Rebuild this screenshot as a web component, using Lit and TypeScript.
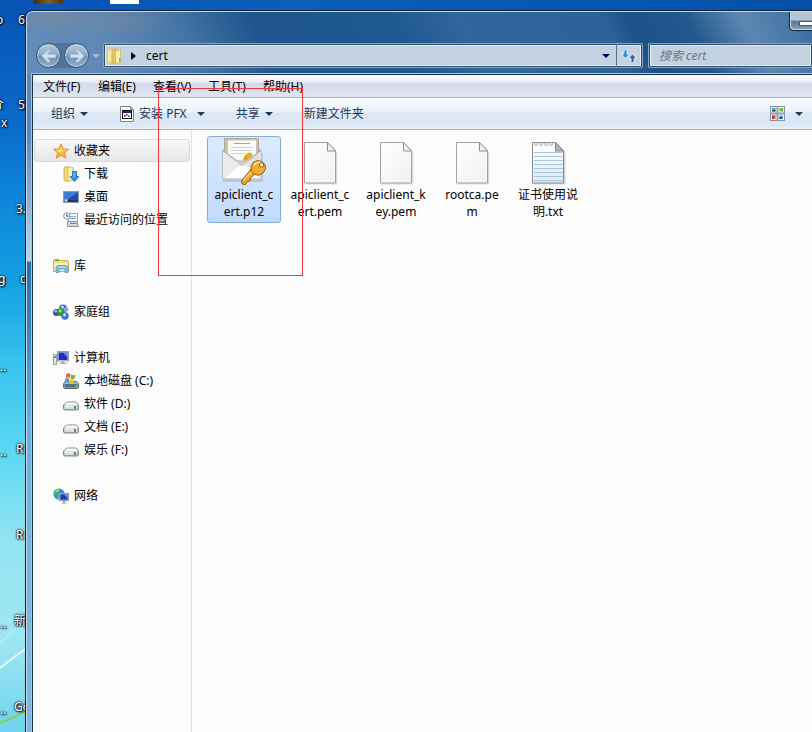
import { LitElement, html, css, svg } from "lit";
import { customElement, property } from "lit/decorators.js";
import { classMap } from "lit/directives/class-map.js";

const FONT = css`"Noto Sans", "Noto Sans CJK SC", sans-serif`;

const drive = svg`
  <path d="M3.500 6.500 5 6h8l2.500 3v4l-1 1H1.500l-1-1V9z" fill="#b4b4b8" stroke="#85868a"/>
  <path d="M4 6.500h9L15 9.500H1z" fill="#fbfbfb"/>
  <path d="M1.500 10h13v3h-13z" fill="#d9d9e4"/>
  <path d="M11 10h2v3h-2z" fill="#35b335"/>
  <path d="M2 10h8v1H2z" fill="#f4f4f8"/>`;

const folderBase = svg`
  <path d="M1 1.500 5 .5l1 1h4v12l-5 2-4-1z" fill="#f1d878" stroke="#c9a545" stroke-width=".8"/>
  <path d="M5 1v14.500l5-2V1.500z" fill="#fbeeb0" stroke="#cfae50" stroke-width=".6"/>`;

const glyphs: Record<string, unknown> = {
  star: svg`
    <path d="M8 .8 10.100 6l5.400.3-4.200 3.500 1.500 5.400L8 12.200l-4.800 3 1.500-5.400L.5 6.300 5.900 6z"
      fill="#ffb732" stroke="#e8892c" stroke-width="1"/>
    <path d="M8 3 9.300 7l3.700.3-3.500 1.200L8 9 5 9 3 7.200 6.700 7z" fill="#ffe08a"/>`,
  downloads: svg`${folderBase}
    <path d="M9.500 5.500h4v5H16l-4.500 5-4.500-5h2.500z" fill="#2f9ae8" stroke="#1567b4" stroke-width=".8"/>
    <path d="M10.500 6.500h1v5h-1z" fill="#8fd0ff"/>`,
  desktop: svg`
    <rect x=".5" y="2.500" width="15" height="11" fill="#1d4fae" stroke="#8d99ad"/>
    <path d="M1 3h14L4 11H1z" fill="#3a7ad4"/>
    <rect x="1" y="11" width="14" height="2" fill="#26364f"/>
    <circle cx="3" cy="11.500" r="1.800" fill="#59c2f2"/>
    <path d="M2 11h2v1H2z" fill="#f4d35e"/>`,
  recent: svg`
    <path d="M5.500 1.500h9v9h-9z" fill="#f7f9fb" stroke="#9ba3ab"/>
    <path d="M7 4h3v1H7zM11 4h2v1h-2zM7 6h6v1H7z" fill="#69a3d8"/>
    <path d="M4.500 9.500h9l2 5h-11z" fill="#d5d9dd" stroke="#888f96"/>
    <path d="M7 11h6v1H7z" fill="#757d84"/>
    <circle cx="3.800" cy="4" r="3.200" fill="#f3f6f8" stroke="#8c959d"/>
    <path d="M3.800 2v2.200h1.700" fill="none" stroke="#555"/>`,
  library: svg`
    <path d="M.5 2.500 1.500 1.500h5l1 1h7l1 1v10H.5z" fill="#f3dd86" stroke="#c9ad58"/>
    <path d="M1 5h14v8H1z" fill="#fbf0b8"/>
    <path d="M2 2h4v1H2z" fill="#45a83a"/>
    <path d="M3 14.500V9.500l1.500-2h9L15 9.500v5h-3V11H6v3.500z" fill="#6fc4ea" stroke="#4a9ccb" stroke-width=".8"/>
    <path d="M5 8.500h8v1H5z" fill="#c9effc"/>`,
  homegroup: svg`
    <circle cx="10" cy="4.500" r="4" fill="#3f6ed0"/>
    <circle cx="3.500" cy="8.500" r="3.500" fill="#2e4fc0"/>
    <circle cx="12" cy="12" r="3.700" fill="#4570d0"/>
    <circle cx="8" cy="8" r="3.900" fill="#2f9a33"/>
    <circle cx="13" cy="5.500" r="2.300" fill="#7fa8e2"/>
    <circle cx="9.500" cy="3" r="1.500" fill="#bcd7f8"/>
    <circle cx="2.800" cy="7.300" r="1.300" fill="#b4c6f7"/>
    <circle cx="7.300" cy="7" r="1.400" fill="#a7e39a"/>
    <circle cx="11.500" cy="11" r="1.400" fill="#d8e7fb"/>`,
  computer: svg`
    <rect x=".5" y="4.500" width="3" height="10" fill="#e4e6e8" stroke="#9a9fa5"/>
    <path d="M1 6h2v2H1z" fill="#3fae3a"/>
    <rect x="4.500" y="1.500" width="11" height="9.500" fill="#d4d8dd" stroke="#9a9fa5"/>
    <rect x="5.500" y="2.500" width="9" height="7.500" fill="#1a2fc0"/>
    <path d="M10 2.500h4.500v5z" fill="#6b93f0"/>
    <path d="M8.500 11.500h3V13h2v1h-7v-1h2z" fill="#a5aab0"/>`,
  system: svg`
    <path d="M2.500 8.500h11l2 2v4l-.8 1H1.300l-.8-1v-4z" fill="#a9b5bd" stroke="#5e6d77"/>
    <path d="M1.500 11h13v3.500h-13z" fill="#4d7488"/>
    <path d="M12.500 12h1.500v2h-1.500z" fill="#62d848"/>
    <path d="M3.500 1q2-1.500 4 0L6.500 5q-2-1.300-4 0z" fill="#e8602c"/>
    <path d="M8.200 1.500q2 1.300 4.300.3L11.500 5.700q-2 1-4.200-.3z" fill="#72b83e"/>
    <path d="M2.300 5.700q2-1.200 4 0L5.300 9.700q-2-1.200-4 0z" fill="#4b9be0"/>
    <path d="M7 6q2 1.200 4.300.3L10.300 10.300q-2.200.9-4.300-.3z" fill="#f8c22e"/>`,
  drive,
  network: svg`
    <circle cx="6" cy="6" r="5.600" fill="#2f8fd4"/>
    <path d="M2 3q3-3 5-2L6 4 3 6 .6 5.500zM5 6l3-1 1 3-3 3.500-2-2z" fill="#58c43f"/>
    <path d="M3 2.500Q5 1 6 1.500L4 4z" fill="#c8f3a8"/>
    <rect x="6.500" y="5.500" width="9" height="7" fill="#c8ced6" stroke="#9aa0a8"/>
    <rect x="7.300" y="6.300" width="7.400" height="5.400" fill="#1b3cc0"/>
    <path d="M11 6.300h3.700v4z" fill="#6f98f0"/>
    <path d="M10 13h2v1.500h1.500v1h-5v-1H10z" fill="#9aa0a7"/>`,
  folder: svg`
    <path d="M.5 2.500 5 .5v15l-4.500-1.500z" fill="#f8ea9c" stroke="#dcc268" stroke-width=".8"/>
    <path d="M5 1.500 10 .5v14l-5 1z" fill="#e3c362" stroke="#d3b552" stroke-width=".8"/>
    <path d="M8.500 3 13.500 1.500v13l-5 1z" fill="#fbefa8" stroke="#d3b552" stroke-width=".8"/>
    <path d="M12 10h1.500v4H12z" fill="#58b4e8"/>`,
  installer: svg`
    <path d="M1.500.5h10l3 3v12h-13z" fill="#fff" stroke="#808080"/>
    <path d="M11.500.5v3h3z" fill="#ccc" stroke="#808080" stroke-width=".8"/>
    <rect x="3.500" y="4.500" width="9" height="8" fill="#fff" stroke="#111"/>
    <path d="M4 5h8v2H4z" fill="#102a90"/>
    <path d="M5 9h1.500v2H5z" fill="#2244d0"/><path d="M7 8h1.500v2H7z" fill="#e02020"/>
    <path d="M9 9.500h2V11H9z" fill="#18a048"/>`,
  views: svg`
    <g fill="#fff" stroke="#8390a6">
      <rect x=".5" y=".5" width="6.500" height="6.500"/><rect x="8" y=".5" width="6.500" height="6.500"/>
      <rect x=".5" y="8" width="6.500" height="6.500"/><rect x="8" y="8" width="6.500" height="6.500"/>
    </g>
    <path d="M2 2h3.500v3.500H2z" fill="#3f9ccc"/><path d="M2 4h3.500v1.500H2z" fill="#1d6a50"/>
    <path d="M9.500 2H13v3.500H9.500z" fill="#5cb53c"/><path d="M9.500 2h2v1.500h-2z" fill="#f0a020"/>
    <path d="M2 9.500h3.500V13H2z" fill="#b82812"/><path d="M4 11h1.500v2H4z" fill="#e8a52c"/>
    <path d="M9.500 9.500H13V13H9.500z" fill="#5b95dc"/><path d="M9.500 11h2v2h-2z" fill="#1b3a78"/>`,
  refresh: svg`
    <path d="M6.500 1Q2 2 2.800 6H.5l4 4.500 4-4.500H6Q5.500 3.500 6.500 1z" fill="#2f8fdc" stroke="#f2f8fd" stroke-width=".8"/>
    <path d="M9.500 15.500q4.500-1 3.700-5h2.300l-4-4.500-4 4.500H10q.5 2.500-.5 5z" fill="#2f62c0" stroke="#f2f8fd" stroke-width=".8"/>`,
  back: svg`<path d="M7.500 1 .5 8l7 7 2-2-3-3H15V6H6.500l3-3z" fill="#d3e0ed" stroke="#86a3c0" stroke-width=".8"/>`,
  forward: svg`<path d="M8.500 1 15.500 8l-7 7-2-2 3-3H1V6h8.500l-3-3z" fill="#d3e0ed" stroke="#86a3c0" stroke-width=".8"/>`,
};

const page = svg`
  <path d="M8.500 4.500h24l8 9v32h-32z" fill="#000" opacity=".12" transform="translate(1 1)"/>
  <path d="M8.500 4.500h23l8 8.500v32h-31z" fill="url(#sheet)" stroke="#a3a3a3"/>
  <path d="M31.500 4.500V13h8z" fill="#f4f4f4" stroke="#8f8f8f"/>`;

const bigGlyphs: Record<string, unknown> = {
  page,
  text: svg`
    <path d="M8.500 4.500h24l8 9v32h-32z" fill="#000" opacity=".15" transform="translate(1 1)"/>
    <path d="M8.500 4.500h23l8 8.500v32h-31z" fill="url(#note)" stroke="#858a91"/>
    <path d="M10 14.500h28M10 18.500h29M10 22.500h29M10 26.500h29M10 30.500h29M10 34.500h29M10 38.500h29M10 42.500h29" stroke="#a9c7da"/>
    <path d="M31.500 4.500V13h8z" fill="#b4b9be" stroke="#7d8389"/>
    <g fill="#fff" stroke="#999" stroke-width=".8">
      <circle cx="12" cy="6" r="1.500"/><circle cx="17" cy="6" r="1.500"/><circle cx="22" cy="6" r="1.500"/><circle cx="27" cy="6" r="1.500"/>
    </g>`,
  certificate: svg`
    <path d="M3 15h40v29H3z" fill="#3a4a60" opacity=".18"/>
    <path d="M2.500 13 7 8h31l3.500 5z" fill="#b9b6b0"/>
    <path d="M4.500.5h34v22h-34z" fill="#cdc2b0" stroke="#b1a792"/>
    <path d="M8 2.500h28v20H8z" fill="#fbfbf9"/>
    <path d="M14 5.500h16" stroke="#9aa6b8"/><path d="M11 9.500h22M11 12.500h20M11 15.500h13" stroke="#cdd2d9"/>
    <path d="m23 21 2-4 4-2 3 4-4 4-3 1z" fill="#e0a416"/><circle cx="29.500" cy="17.500" r="3" fill="#eab020"/>
    <path d="M2.500 12.500 22 25.500l19-13v28h-38.500z" fill="#f5f5f6" stroke="#bdbdc0"/>
    <path d="M3 13l16 12L3 40z" fill="#ebebec"/><path d="M41 13 25 25l16 15z" fill="#e0e0e3"/>
    <path d="M3 40.500 19 27q3-2 6 0l16 13.500z" fill="#fff" stroke="#d6d6d8"/>
    <path d="M2.500 12.500 22 27.500l19-15" fill="none" stroke="#a9acb2"/>
    <path d="m31 31 4.500 4.500-5 4.500-.5 3-3 .5-1.500 3-3.500-.5-.5-3z" fill="#f0a52c" stroke="#94600f"/>
    <path d="M33 24.500q5-3.500 9-1 4.500 3 3.500 7.500-1.500 5-6.500 6-5 .5-7.500-3.500-1.500-5 1.500-9z" fill="#f4ab35" stroke="#95600f"/>
    <path d="M34 27q3.500-4 8-2" fill="none" stroke="#ffe3a0" stroke-width="1.500"/>
    <circle cx="41.500" cy="27" r="2.200" fill="#e9eef5" stroke="#95600f"/>
    <path d="m31.500 34-8 8.500" stroke="#ffd884" stroke-width="1.200"/>`,
};

@customElement("ui-icon")
class UiIcon extends LitElement {
  @property() name = "";
  @property({ type: Boolean, reflect: true }) large = false;

  static styles = css`
    :host { display: block; flex: none; width: 16px; height: 16px; }
    :host([large]) { width: 48px; height: 48px; }
    svg { display: block; width: 100%; height: 100%; }
  `;

  render() {
    if (!this.large) {
      return html`<svg viewBox="0 0 16 16" aria-hidden="true">${glyphs[this.name]}</svg>`;
    }
    return html`
      <svg viewBox="0 0 48 48" aria-hidden="true">
        <defs>
          <linearGradient id="sheet" x1="0" y1="0" x2="1" y2="1">
            <stop offset="0" stop-color="#ffffff"/><stop offset="1" stop-color="#f1f0ee"/>
          </linearGradient>
          <linearGradient id="note" x1="0" y1="0" x2="0" y2="1">
            <stop offset="0" stop-color="#ffffff"/><stop offset="1" stop-color="#dfe9f5"/>
          </linearGradient>
        </defs>
        ${bigGlyphs[this.name]}
      </svg>`;
  }
}

interface Place { label: string; icon: string; children?: Place[]; selected?: boolean; }

const places: Place[] = [
  {
    label: "收藏夹", icon: "star", selected: true,
    children: [
      { label: "下载", icon: "downloads" },
      { label: "桌面", icon: "desktop" },
      { label: "最近访问的位置", icon: "recent" },
    ],
  },
  { label: "库", icon: "library" },
  { label: "家庭组", icon: "homegroup" },
  {
    label: "计算机", icon: "computer",
    children: [
      { label: "本地磁盘 (C:)", icon: "system" },
      { label: "软件 (D:)", icon: "drive" },
      { label: "文档 (E:)", icon: "drive" },
      { label: "娱乐 (F:)", icon: "drive" },
    ],
  },
  { label: "网络", icon: "network" },
];

@customElement("place-tree")
class PlaceTree extends LitElement {
  static styles = css`
    :host { display: block; font: 12px/23px ${FONT}; }
    ul { list-style: none; margin: 0; padding: 0; }
    .groups { display: flex; flex-direction: column; gap: 23px; padding: 9px 1px 0; }
    .link {
      display: flex; align-items: center; gap: 5px; height: 23px; box-sizing: border-box;
      padding-left: 18px; border: 1px solid transparent; border-radius: 3px;
      color: #000; text-decoration: none; white-space: nowrap;
    }
    .child { padding-left: 28px; }
    .selected { border-color: #d9d9d9; background: linear-gradient(#f8f8f8, #e6e6e6); }
  `;

  private row(p: Place, child: boolean) {
    return html`<a class=${classMap({ link: true, child, selected: !!p.selected })} href="#">
      <ui-icon name=${p.icon}></ui-icon><span>${p.label}</span></a>`;
  }

  render() {
    return html`
      <ul class="groups">
        ${places.map((p) => html`
          <li>
            ${this.row(p, false)}
            ${p.children ? html`<ul>${p.children.map((c) => html`<li>${this.row(c, true)}</li>`)}</ul>` : ""}
          </li>`)}
      </ul>`;
  }
}

const files = [
  { lines: ["apiclient_c", "ert.p12"], icon: "certificate", selected: true },
  { lines: ["apiclient_c", "ert.pem"], icon: "page" },
  { lines: ["apiclient_k", "ey.pem"], icon: "page" },
  { lines: ["rootca.pe", "m"], icon: "page" },
  { lines: ["证书使用说", "明.txt"], icon: "text" },
];

@customElement("file-grid")
class FileGrid extends LitElement {
  static styles = css`
    :host { display: block; }
    .files { display: flex; flex-wrap: wrap; gap: 2px; list-style: none; margin: 0; padding: 6px 15px; }
    .file {
      display: flex; flex-direction: column; align-items: center; box-sizing: border-box;
      width: 74px; height: 87px; padding: 1px 0; border: 1px solid transparent; border-radius: 3px;
      background: none; color: #000; font: 12px/17px ${FONT}; white-space: nowrap;
    }
    .selected { border-color: #84acdd; background: linear-gradient(#dcebfc, #c1dbfc); }
    .line { display: block; }
  `;

  render() {
    return html`
      <ul class="files">
        ${files.map((f) => html`
          <li>
            <button class=${classMap({ file: true, selected: !!f.selected })}>
              <ui-icon large name=${f.icon}></ui-icon>
              <span>${f.lines.map((l) => html`<span class="line">${l}</span>`)}</span>
            </button>
          </li>`)}
      </ul>`;
  }
}

@customElement("explorer-window")
class ExplorerWindow extends LitElement {
  static styles = css`
    :host {
      display: flex; flex-direction: column; box-sizing: border-box; overflow: hidden;
      border: solid #0b1d33; border-width: 1px 0 0 1px; border-top-left-radius: 7px;
      font: 12px/16px ${FONT}; color: #000;
    }
    button { margin: 0; padding: 0; border: 0; background: none; font: inherit; color: inherit; }
    .header {
      border: solid #c8dcec; border-width: 1px 0 0 1px; border-top-left-radius: 6px;
      background:
        radial-gradient(ellipse 60px 14px at 25px 8px, rgba(125, 135, 155, .6), transparent),
        radial-gradient(ellipse 50px 14px at 100px 9px, rgba(125, 135, 155, .5), transparent),
        linear-gradient(62deg, #648cb8 0%, #5f88b4 12%, #4474a6 22%, #1e558d 31%, #1f5990 48%, #2f669b 56%, #2c6297 74%, #1d5288 77%, #23588e 84%, #5c87b1 91%, #3a6b9f 100%);
    }
    .title { display: flex; justify-content: flex-end; height: 31px; }
    .minimize {
      display: flex; justify-content: flex-end; align-items: flex-end; box-sizing: border-box; width: 23px; height: 19px;
      padding: 0 0 4px; border: solid #12283f; border-width: 0 0 1px 1px; border-bottom-left-radius: 5px;
      background: linear-gradient(#b3c4d5 0 45%, #5a7590 50%, #8ba5bd);
      box-shadow: inset 1px -1px 0 #c5d5e3;
    }
    .dash { width: 13px; height: 5px; box-sizing: border-box; border: 1px solid #4b5663; border-right: 0; background: #fff; }
    .nav { display: flex; align-items: center; height: 25px; padding: 0 0 5px 9px; }
    .history { display: flex; gap: 3px; border-radius: 13px; background: rgba(60, 95, 135, .5); }
    .round {
      display: grid; place-items: center; box-sizing: border-box; width: 25px; height: 25px;
      border: 1px solid #37557a; border-radius: 50%;
      background: linear-gradient(#b9cadc, #8faac6 48%, #6c8fb4 52%, #8fb0ce);
      box-shadow: inset 0 0 0 1px rgba(215, 230, 245, .6);
    }
    .recent { display: grid; place-items: center; width: 14px; height: 25px; }
    .arrow { flex: none; width: 0; height: 0; border: solid transparent; border-width: 4px 4px 0; border-top-color: #1e395b; }
    .pale { border-top-color: #a6bdd6; }
    .navy { border-top-color: #000060; }
    .field {
      display: flex; align-items: center; box-sizing: border-box; height: 25px;
      border: 1px solid #84a4c3; border-radius: 2px; background: #c3d2e1;
      box-shadow: inset 0 0 0 1px #36506c, inset 0 0 0 2px #e4edf4;
    }
    .address { flex: 1; min-width: 0; padding: 0 1px 0 3px; }
    .crumb { display: flex; align-items: center; flex: 1; gap: 10px; padding-left: 8px; }
    .caret { width: 0; height: 0; border: solid transparent; border-width: 4px 0 4px 5px; border-left-color: #000; }
    .drop { display: grid; place-items: center; width: 20px; height: 21px; }
    .refresh { display: grid; place-items: center; box-sizing: border-box; width: 25px; height: 23px; border-left: 1px solid #5c7085; }
    .search { flex: 0 0 164px; margin-left: 5px; border-right: 0; }
    .query {
      width: 100%; box-sizing: border-box; border: 0; outline: 0; padding: 0 10px; background: none;
      font: italic 12px/16px ${FONT};
    }
    .query::placeholder { color: #6c7680; opacity: 1; }
    .body {
      display: flex; flex: 1; border-left: 1px solid #c8dcec; padding-left: 4px;
      background: linear-gradient(#5f87b3 0, #5b86ba 60px, #b6cfe8 180px, #b9d3ea 188px, #2e6ea6 189px, #3980b6 250px, #66b0dc 350px, #76b4dd 480px, #80b6e2 100%);
    }
    .client {
      display: flex; flex-direction: column; flex: 1; min-width: 0;
      border: solid #a9c6de; border-width: 1px 0 0 1px;
    }
    .inner { display: flex; flex-direction: column; flex: 1; border: solid #17344f; border-width: 1px 0 0 1px; background: #fcfcfc; }
    .menu {
      display: grid; grid-template-columns: repeat(5, 55px); height: 22px; padding-left: 10px;
      border-bottom: 1px solid #a9b3c8; background: linear-gradient(#fff 0, #ecedf6 7px, #d4daec 8px, #e0e5f4 100%);
    }
    .item { text-align: left; white-space: nowrap; padding-top: 2px; }
    .tools {
      display: flex; align-items: center; height: 31px; padding: 0 9px 0 18px; border-bottom: 1px solid #a0afc4;
      background: linear-gradient(#fcfeff 0, #e8f2fb 14px, #dce6f4 15px, #dde8f6 28px, #e9f1fb 100%); color: #1e395b;
    }
    .tool { display: flex; align-items: center; gap: 5px; white-space: nowrap; }
    .install { margin-left: 31px; gap: 10px; }
    .named { display: flex; align-items: center; gap: 4px; }
    .share, .create { margin-left: 31px; }
    .views { margin-left: auto; gap: 9px; }
    .panes { display: flex; flex: 1; }
    .side { flex: none; width: 158px; border-right: 1px solid #d9e3f3; }
    .main { flex: 1; min-width: 0; }
  `;

  render() {
    return html`
      <header class="header">
        <div class="title"><button class="minimize" aria-label="最小化"><span class="dash"></span></button></div>
        <div class="nav">
          <div class="history">
            <button class="round" aria-label="后退"><ui-icon name="back"></ui-icon></button>
            <button class="round" aria-label="前进"><ui-icon name="forward"></ui-icon></button>
          </div>
          <button class="recent" aria-label="最近的页面"><span class="arrow pale"></span></button>
          <div class="field address">
            <ui-icon name="folder"></ui-icon>
            <button class="crumb"><span class="caret"></span>cert</button>
            <button class="drop" aria-label="以前的位置"><span class="arrow navy"></span></button>
            <button class="refresh" aria-label="刷新"><ui-icon name="refresh"></ui-icon></button>
          </div>
          <div class="field search"><input class="query" type="text" aria-label="搜索" placeholder="搜索 cert"></div>
        </div>
      </header>
      <div class="body">
        <div class="client"><div class="inner">
          <nav class="menu">
            ${["文件(F)", "编辑(E)", "查看(V)", "工具(T)", "帮助(H)"].map((m) => html`<button class="item">${m}</button>`)}
          </nav>
          <div class="tools">
            <button class="tool">组织<span class="arrow"></span></button>
            <button class="tool install">
              <span class="named"><ui-icon name="installer"></ui-icon>安装 PFX</span><span class="arrow"></span>
            </button>
            <button class="tool share">共享<span class="arrow"></span></button>
            <button class="tool create">新建文件夹</button>
            <button class="tool views" aria-label="更改视图"><ui-icon name="views"></ui-icon><span class="arrow"></span></button>
          </div>
          <div class="panes">
            <nav class="side"><place-tree></place-tree></nav>
            <main class="main"><file-grid></file-grid></main>
          </div>
        </div></div>
      </div>`;
  }
}

const shortcuts = [
  { text: "o", x: -4, y: 11 }, { text: "6", x: 18, y: 11 },
  { text: "介", x: -8, y: 96 }, { text: "5", x: 18, y: 96 }, { text: "x", x: 1, y: 114 },
  { text: "3.", x: 16, y: 200 }, { text: "g", x: -2, y: 270 }, { text: "c", x: 20, y: 270 },
  { text: "..", x: 0, y: 358 }, { text: "..", x: 0, y: 443 }, { text: "R", x: 16, y: 440 },
  { text: "R", x: 16, y: 526 }, { text: "..", x: 0, y: 615 }, { text: "新", x: 14, y: 612 },
  { text: "..", x: 0, y: 701 }, { text: "Go", x: 14, y: 698 },
];

@customElement("app-root")
class AppRoot extends LitElement {
  static styles = css`
    :host {
      display: flex; position: relative; min-height: 100vh; overflow: hidden; box-sizing: border-box; padding: 10px 0 0 25px;
      background:
        linear-gradient(90deg, transparent 40px, #0a5fba 300px, #0450a8 100%) 0 0 / 100% 12px no-repeat,
        linear-gradient(#0753b4 0, #0a6ccc 130px, #0e86da 200px, #12a0e2 280px, #3bc4ee 370px, #5ad8f2 450px, #93e4f2 540px, #9fe6f3 640px, #6fd3ec 732px);
    }
    .window { position: relative; flex: 1; min-width: 0; }
    .label {
      position: absolute; color: #fff; font: 12px/18px ${FONT};
      text-shadow: 0 0 2px #000, 0 0 2px #000, 1px 1px 2px #000;
    }
    .streaks { position: absolute; left: 0; bottom: 0; width: 25px; height: 112px; }
    .photo { position: absolute; left: 34px; top: 0; width: 29px; height: 4px; background: linear-gradient(90deg, #3d2c10, #7d6025, #4a3512); }
    .paper { position: absolute; left: 110px; top: 0; width: 29px; height: 4px; background: #fff; }
    .marquee { position: absolute; left: 158px; top: 88px; width: 143px; height: 186px; border: 1px solid #f33a3a; pointer-events: none; }
  `;

  render() {
    return html`
      <svg class="streaks" viewBox="0 0 25 112" aria-hidden="true">
        <path d="M0 48 25 29" stroke="#e8fbff" stroke-width="2"/>
        <path d="M0 23 25 0" stroke="#c4f1fa"/>
        <path d="M0 103 25 92" stroke="#83d24c" stroke-width="2"/>
      </svg>
      <span class="photo"></span><span class="paper"></span>
      ${shortcuts.map((s) => html`<span class="label" style="left:${s.x}px;top:${s.y}px">${s.text}</span>`)}
      <explorer-window class="window"></explorer-window>
      <div class="marquee"></div>`;
  }
}
